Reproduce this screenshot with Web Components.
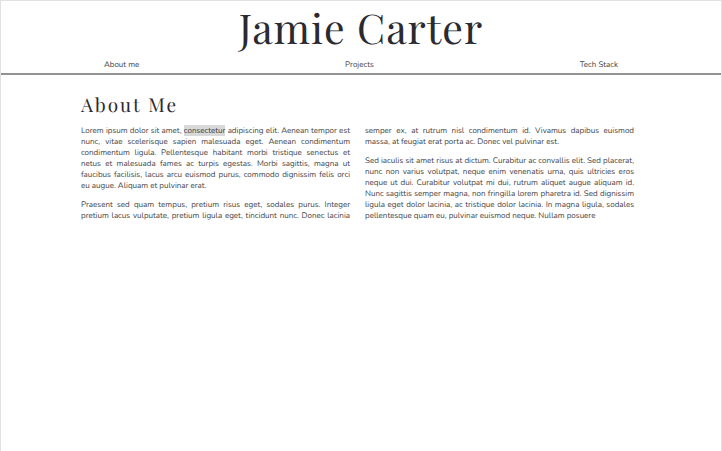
<!DOCTYPE html>
<html lang="en">
<head>
<meta charset="utf-8">
<title>Jamie Carter</title>
<style>
html, body { margin: 0; background: #fff; }
body { color: #434345; font: 8px/11px Nunito, Lato, sans-serif; text-rendering: geometricPrecision; }
</style>
</head>
<body>
<portfolio-page>
  <site-header slot="header" name="Jamie Carter">
    <nav-link href="#about">About me</nav-link>
    <nav-link href="#projects">Projects</nav-link>
    <nav-link href="#stack">Tech Stack</nav-link>
  </site-header>
  <article-section id="about" heading="About Me">
    <text-block>Lorem ipsum dolor sit amet, <mark>consectetur</mark> adipiscing elit. Aenean tempor est nunc, vitae scelerisque sapien malesuada eget. Aenean condimentum condimentum ligula. Pellentesque habitant morbi tristique senectus et netus et malesuada fames ac turpis egestas. Morbi sagittis, magna ut faucibus facilisis, lacus arcu euismod purus, commodo dignissim felis orci eu augue. Aliquam et pulvinar erat.</text-block>
    <text-block>Praesent sed quam tempus, pretium risus eget, sodales purus. Integer pretium lacus vulputate, pretium ligula eget, tincidunt nunc. Donec lacinia semper ex, at rutrum nisl condimentum id. Vivamus dapibus euismod massa, at feugiat erat porta ac. Donec vel pulvinar est.</text-block>
    <text-block>Sed iaculis sit amet risus at dictum. Curabitur ac convallis elit. Sed placerat, nunc non varius volutpat, neque enim venenatis urna, quis ultricies eros neque ut dui. Curabitur volutpat mi dui, rutrum aliquet augue aliquam id. Nunc sagittis semper magna, non fringilla lorem pharetra id. Sed dignissim ligula eget dolor lacinia, ac tristique dolor lacinia. In magna ligula, sodales pellentesque quam eu, pulvinar euismod neque. Nullam posuere</text-block>
  </article-section>
</portfolio-page>
<script>
const define = (name, html, setup) => {
  const template = document.createElement('template');
  template.innerHTML = html;
  customElements.define(name, class extends HTMLElement {
    connectedCallback() {
      if (this.shadowRoot) return;
      const root = this.attachShadow({ mode: 'open' });
      root.append(template.content.cloneNode(true));
      if (setup) setup(this, root);
    }
  });
};

define('portfolio-page', `
<style>
:host { display: block; box-sizing: border-box; min-height: 100vh; border: 1px solid #e1e1e1; border-bottom: 0; }
main { padding: 16px 87px 16px 80px; }
</style>
<slot name="header"></slot>
<main><slot></slot></main>`);

define('site-header', `
<style>
:host { display: block; border-bottom: 2px solid #929292; }
h1 { margin: 0; padding-bottom: 4px; color: #2b2a30; font: 400 41px/54px "Playfair Display", "Liberation Serif", serif; letter-spacing: 1px; text-align: center; }
nav { display: flex; justify-content: space-around; padding-bottom: 3px; }
</style>
<header><h1></h1><nav aria-label="Main"><slot></slot></nav></header>`,
(el, root) => { root.querySelector('h1').textContent = el.getAttribute('name'); });

define('nav-link', `
<style>
:host { display: block; }
a { color: inherit; text-decoration: none; }
</style>
<a><slot></slot></a>`,
(el, root) => { root.querySelector('a').href = el.getAttribute('href'); });

define('article-section', `
<style>
:host { display: block; }
h2 { margin: 0 0 8px; color: #2b2a30; font: 400 19px/26px "Playfair Display", "Liberation Serif", serif; letter-spacing: 2px; }
.columns { columns: 2; column-gap: 15px; text-align: justify; }
</style>
<section><h2></h2><div class="columns"><slot></slot></div></section>`,
(el, root) => { root.querySelector('h2').textContent = el.getAttribute('heading'); });

define('text-block', `
<style>
:host { display: block; margin-bottom: 8px; }
:host(:last-of-type) { margin-bottom: 0; }
p { margin: 0; }
::slotted(mark) { background: #d9d9d9; color: inherit; }
</style>
<p><slot></slot></p>`);
</script>
</body>
</html>
